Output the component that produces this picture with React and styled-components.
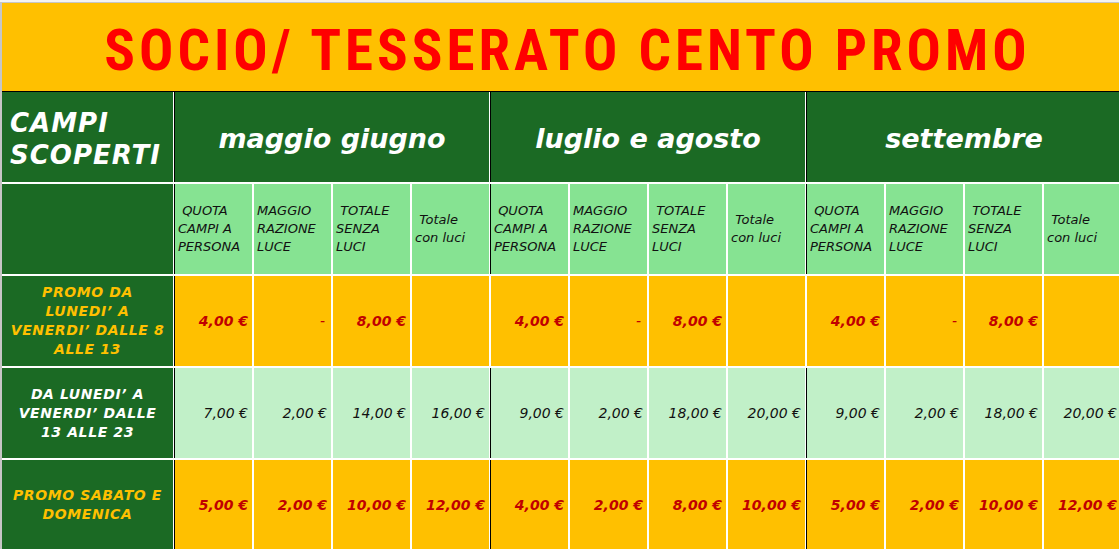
import React from 'react'
import styled, { createGlobalStyle } from 'styled-components'

const colors = {
  orange: '#FFC000',
  red: '#FF0000',
  darkRed: '#C00000',
  green: '#1B6A24',
  lightGreen: '#86E392',
  paleGreen: '#C1F0C8',
  grid: '#C6C6C6',
}

const GlobalStyle = createGlobalStyle`
  html, body {
    margin: 0;
    padding: 0;
    background: #fff;
  }
  body {
    font-family: "DejaVu Sans", Verdana, sans-serif;
  }
`

const Page = styled.div`
  width: 1119px;
  height: 549px;
  overflow: hidden;
  background: #fff;
`

const Ruler = styled.div`
  height: 2px;
  background: #f3f3f3;
  border-bottom: 1px solid ${colors.grid};
`

const Sheet = styled.div`
  border-left: 2px solid ${colors.grid};
`

const Title = styled.div`
  height: 89px;
  background: ${colors.orange};
  border-bottom: 1px solid #000;
  display: flex;
  align-items: center;
  justify-content: center;
  padding: 6px 0 0 14px;
  box-sizing: border-box;
  color: ${colors.red};
  font-family: "Liberation Sans Narrow", "Roboto Condensed", "Liberation Sans", sans-serif;
  font-weight: 700;
  font-size: 57px;
  letter-spacing: 4px;
`

const Grid = styled.div`
  display: grid;
  grid-template-columns: 171px repeat(12, 77px);
  grid-template-rows: repeat(5, 90px);
  gap: 2px;
  background: #fff;
`

const Corner = styled.div`
  background: ${colors.green};
  color: #fff;
  font-weight: 700;
  font-style: italic;
  font-size: 26px;
  line-height: 32px;
  letter-spacing: 1px;
  padding: 15px 0 0 8px;
`

const MonthHead = styled.div`
  grid-column: span 4;
  background: ${colors.green};
  color: #fff;
  font-weight: 700;
  font-style: italic;
  font-size: 27px;
  display: flex;
  align-items: center;
  justify-content: center;
  padding-top: 3px;
  box-sizing: border-box;
  box-shadow: -1px 0 0 #000;
`

const Blank = styled.div`
  background: ${colors.green};
`

const SubHead = styled.div`
  background: ${colors.lightGreen};
  color: #111;
  font-style: italic;
  font-size: 13px;
  line-height: 18px;
  white-space: pre;
  display: flex;
  align-items: center;
  padding-left: 3px;
  box-shadow: ${(p) => (p.$start ? '-1px 0 0 #000' : 'none')};
`

const Label = styled.div`
  background: ${colors.green};
  color: ${(p) => p.$tone};
  font-weight: 700;
  font-style: italic;
  font-size: 14px;
  line-height: 19px;
  text-align: center;
  letter-spacing: 0.6px;
  display: flex;
  align-items: center;
  justify-content: center;
  padding: 0 2px;
  white-space: nowrap;
`

const Value = styled.div`
  background: ${(p) => (p.$promo ? colors.orange : colors.paleGreen)};
  color: ${(p) => (p.$promo ? colors.darkRed : '#111')};
  font-weight: ${(p) => (p.$promo ? 700 : 400)};
  font-style: italic;
  font-size: 14px;
  display: flex;
  align-items: center;
  justify-content: flex-end;
  padding-right: 4px;
  white-space: nowrap;
  box-shadow: ${(p) => (p.$start ? '-1px 0 0 #000' : 'none')};
`

const Dash = styled.span`
  font-weight: 400;
  padding-right: 2px;
`

const months = ['maggio giugno', 'luglio e agosto', 'settembre']

const subHeads = [
  ' QUOTA\nCAMPI A\nPERSONA',
  'MAGGIO\nRAZIONE\nLUCE',
  ' TOTALE\nSENZA\nLUCI',
  ' Totale\ncon luci',
]

const rows = [
  {
    label: 'PROMO DA\nLUNEDI’ A\nVENERDI’ DALLE 8\nALLE 13',
    promo: true,
    values: [
      ['4,00 €', '-', '8,00 €', ''],
      ['4,00 €', '-', '8,00 €', ''],
      ['4,00 €', '-', '8,00 €', ''],
    ],
  },
  {
    label: 'DA LUNEDI’ A\nVENERDI’ DALLE\n13 ALLE 23',
    promo: false,
    values: [
      ['7,00 €', '2,00 €', '14,00 €', '16,00 €'],
      ['9,00 €', '2,00 €', '18,00 €', '20,00 €'],
      ['9,00 €', '2,00 €', '18,00 €', '20,00 €'],
    ],
  },
  {
    label: 'PROMO SABATO E\nDOMENICA',
    promo: true,
    values: [
      ['5,00 €', '2,00 €', '10,00 €', '12,00 €'],
      ['4,00 €', '2,00 €', '8,00 €', '10,00 €'],
      ['5,00 €', '2,00 €', '10,00 €', '12,00 €'],
    ],
  },
]

const lines = (text) =>
  text.split('\n').map((l, i) => (
    <React.Fragment key={i}>
      {i > 0 && <br />}
      {l}
    </React.Fragment>
  ))

export default function App() {
  return (
    <Page>
      <GlobalStyle />
      <Ruler />
      <Sheet>
        <Title>SOCIO/ TESSERATO CENTO PROMO</Title>
        <Grid>
          <Corner>
            CAMPI
            <br />
            SCOPERTI
          </Corner>
          {months.map((m) => (
            <MonthHead key={m}>{m}</MonthHead>
          ))}

          <Blank />
          {months.map((m) =>
            subHeads.map((s, i) => (
              <SubHead key={m + i} $start={i === 0}>
                <div>{s}</div>
              </SubHead>
            ))
          )}

          {rows.map((row, r) => (
            <React.Fragment key={r}>
              <Label $tone={row.promo ? colors.orange : '#fff'}>
                <div>{lines(row.label)}</div>
              </Label>
              {row.values.map((group, g) =>
                group.map((v, i) => (
                  <Value key={g + '-' + i} $promo={row.promo} $start={i === 0 && (g === 0 || !row.promo || r === 2)}>
                    {v === '-' ? <Dash>-</Dash> : v}
                  </Value>
                ))
              )}
            </React.Fragment>
          ))}
        </Grid>
      </Sheet>
    </Page>
  )
}
